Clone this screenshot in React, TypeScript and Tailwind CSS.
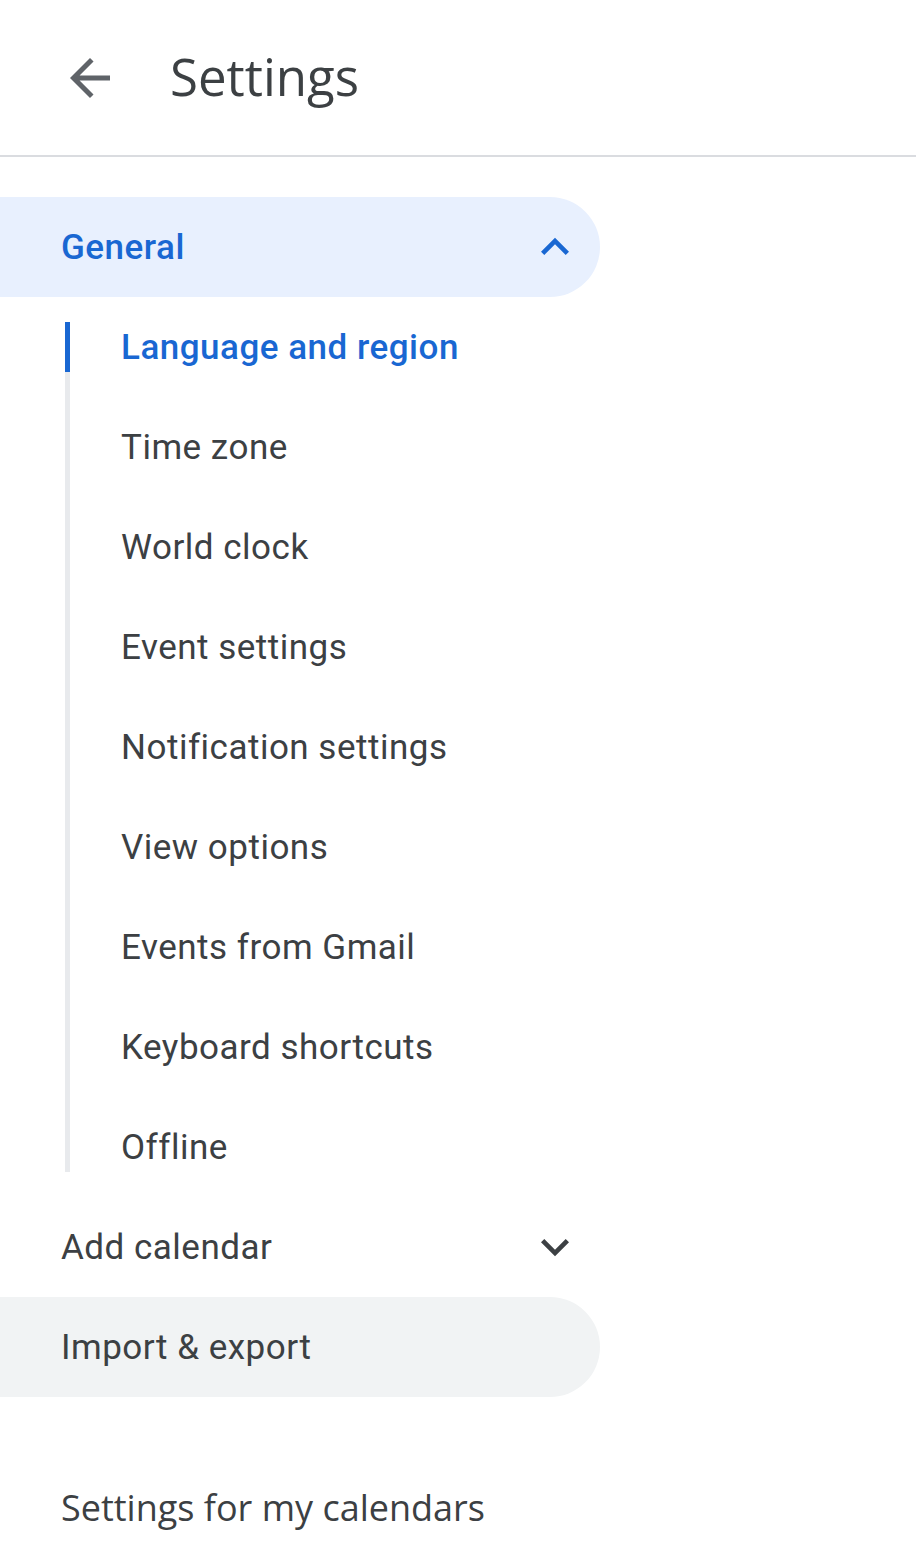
import React from "react";

const subItems = [
  "Language and region",
  "Time zone",
  "World clock",
  "Event settings",
  "Notification settings",
  "View options",
  "Events from Gmail",
  "Keyboard shortcuts",
  "Offline",
];

const sans = "font-['Roboto','Liberation_Sans',sans-serif]";
const display = "font-['Open_Sans','Roboto',sans-serif]";

function ChevronUp({ className = "" }: { className?: string }) {
  return (
    <svg viewBox="0 0 24 24" className={className} fill="currentColor">
      <path d="M12 8l-6 6 1.41 1.41L12 10.83l4.59 4.58L18 14z" />
    </svg>
  );
}

function ChevronDown({ className = "" }: { className?: string }) {
  return (
    <svg viewBox="0 0 24 24" className={className} fill="currentColor">
      <path d="M16.59 8.59L12 13.17 7.41 8.59 6 10l6 6 6-6z" />
    </svg>
  );
}

function BackArrow({ className = "" }: { className?: string }) {
  return (
    <svg viewBox="0 0 24 24" className={className} fill="currentColor">
      <path d="M20 11H7.83l5.59-5.59L12 4l-8 8 8 8 1.41-1.41L7.83 13H20v-2z" />
    </svg>
  );
}

export default function App() {
  return (
    <div className={`min-h-screen w-[916px] bg-white text-[#3c4043] ${sans}`}>
      {/* Header */}
      <header className="flex h-[157px] items-center border-b-2 border-[#dadce0]">
        <button className="ml-[60px] flex h-[60px] w-[60px] items-center justify-center text-[#5f6368]">
          <BackArrow className="h-[60px] w-[60px]" />
        </button>
        <h1 className={`ml-[50px] pb-[2px] text-[51px] leading-none text-[#3c4043] ${display}`}>
          Settings
        </h1>
      </header>

      <nav className="pt-[40px]">
        {/* General group */}
        <div className="flex h-[100px] w-[600px] items-center justify-between rounded-r-full bg-[#e8f0fe] pl-[61px] pr-[17px]">
          <span className="pt-[3px] text-[35px] font-medium tracking-[0.5px] text-[#1967d2]">General</span>
          <ChevronUp className="h-[56px] w-[56px] text-[#1967d2]" />
        </div>

        <ul className="ml-[65px]">
          {subItems.map((label, i) => {
            const first = i === 0;
            const last = i === subItems.length - 1;
            return (
              <li key={label} className="flex h-[100px]">
                <div className="flex w-[5px] flex-col">
                  {first ? (
                    <>
                      <div className="h-[25px]" />
                      <div className="h-[50px] bg-[#1967d2]" />
                      <div className="h-[25px] bg-[#e8eaed]" />
                    </>
                  ) : last ? (
                    <>
                      <div className="h-[75px] bg-[#e8eaed]" />
                      <div className="h-[25px]" />
                    </>
                  ) : (
                    <div className="h-[100px] bg-[#e8eaed]" />
                  )}
                </div>
                <span
                  className={`ml-[51px] flex items-center pt-[3px] text-[35px] tracking-[0.5px] ${
                    first ? "font-medium text-[#1967d2]" : "text-[#3c4043]"
                  }`}
                >
                  {label}
                </span>
              </li>
            );
          })}
        </ul>

        {/* Other groups */}
        <div className="flex h-[100px] w-[600px] items-center justify-between pl-[61px] pr-[17px]">
          <span className="pt-[3px] text-[35px] tracking-[0.5px]">Add calendar</span>
          <ChevronDown className="h-[56px] w-[56px] text-[#3c4043]" />
        </div>
        <div className="flex h-[100px] w-[600px] items-center rounded-r-full bg-[#f1f3f4] pl-[61px]">
          <span className="pt-[3px] text-[35px] tracking-[0.5px]">Import &amp; export</span>
        </div>

        <h2 className={`mt-[93px] pl-[61px] text-[36px] font-medium leading-none ${display}`}>
          Settings for my calendars
        </h2>
      </nav>
    </div>
  );
}
